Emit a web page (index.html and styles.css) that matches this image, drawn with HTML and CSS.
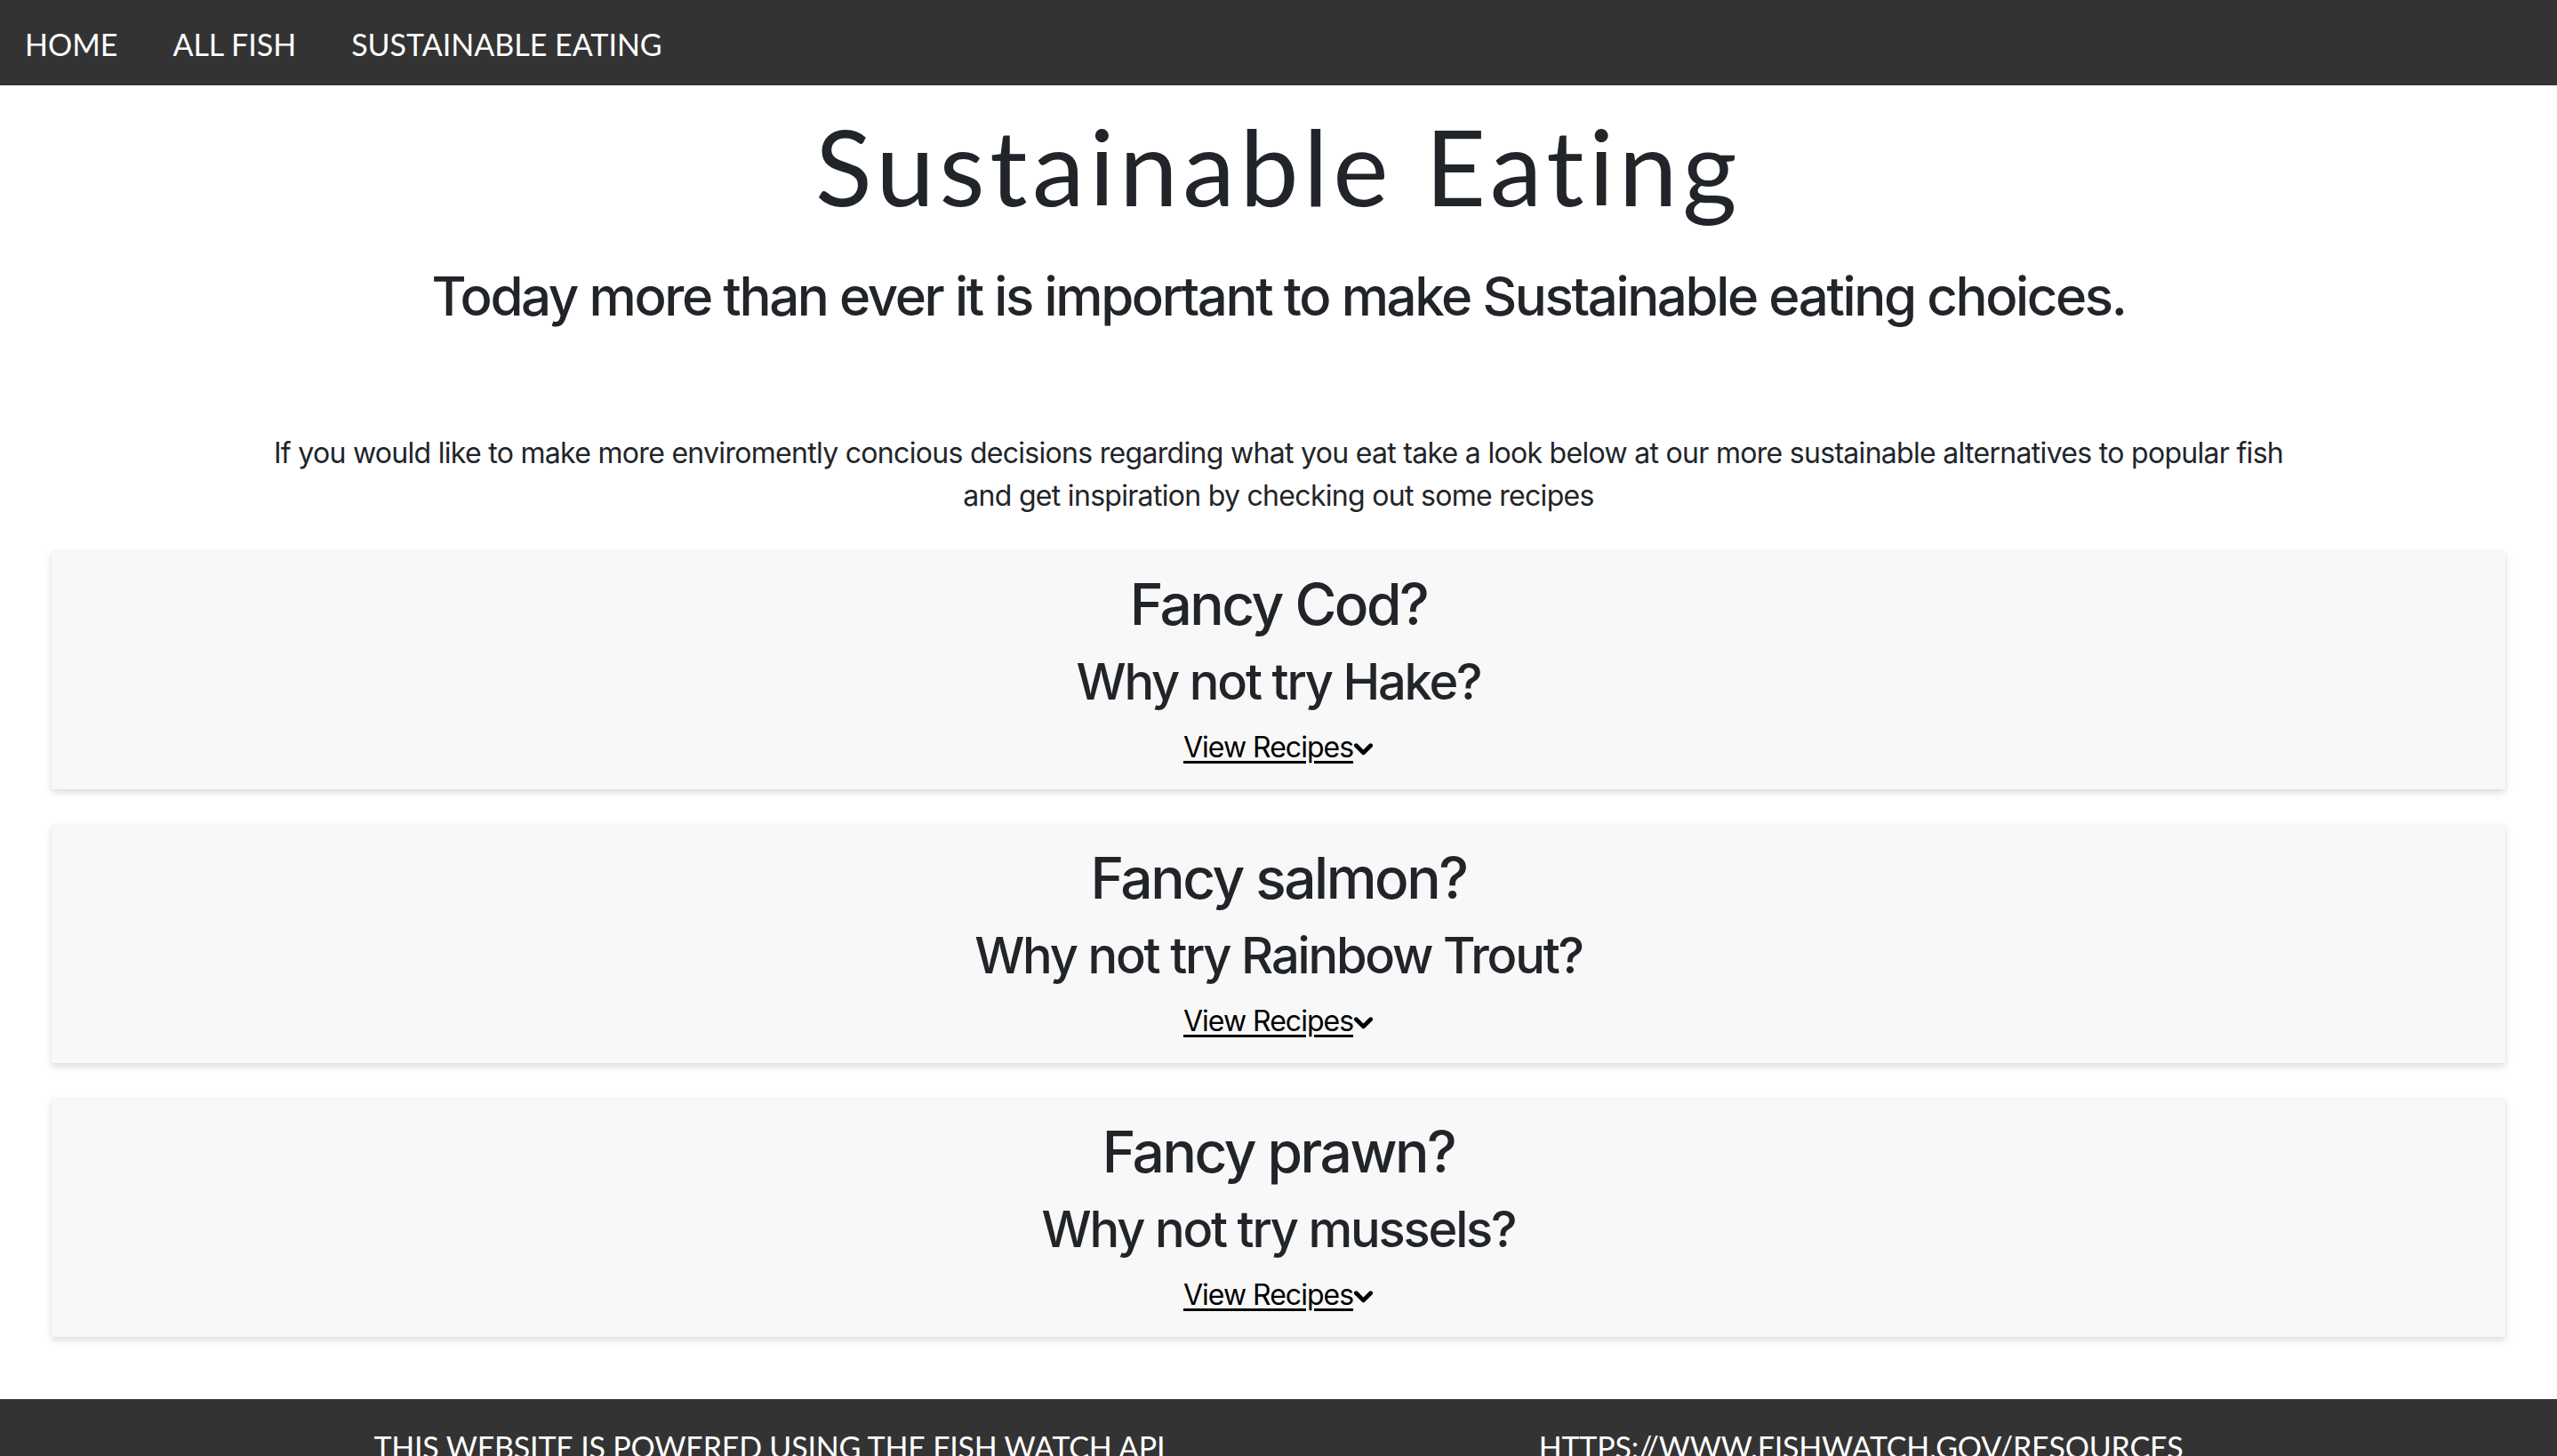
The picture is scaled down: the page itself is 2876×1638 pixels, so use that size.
FILE: index.html
```html
<!DOCTYPE html>
<html lang="en">
<head>
<meta charset="utf-8">
<title>Sustainable Eating</title>
<link rel="stylesheet" href="styles.css">
</head>
<body>
<nav class="topnav">
  <a class="nav-link" href="#">HOME</a>
  <a class="nav-link" href="#">ALL FISH</a>
  <a class="nav-link" href="#">SUSTAINABLE EATING</a>
</nav>
<main class="content">
  <h1 class="page-title">Sustainable Eating</h1>
  <h2 class="lead-title">Today more than ever it is important to make Sustainable eating choices.</h2>
  <p class="intro">If you would like to make more enviromently concious decisions regarding what you eat take a look below at our more sustainable alternatives to popular fish<br>and get inspiration by checking out some recipes</p>

  <section class="swap-card">
    <h2 class="swap-from">Fancy Cod?</h2>
    <h3 class="swap-to">Why not try Hake?</h3>
    <a class="recipes-link" href="#"><span class="recipes-text">View Recipes</span><svg class="chevron" viewBox="0 0 24 16" width="23" height="16"><polyline points="3.5,3.5 12,12 20.5,3.5" fill="none" stroke="#000" stroke-width="5" stroke-linecap="round" stroke-linejoin="round"/></svg></a>
  </section>

  <section class="swap-card">
    <h2 class="swap-from">Fancy salmon?</h2>
    <h3 class="swap-to">Why not try Rainbow Trout?</h3>
    <a class="recipes-link" href="#"><span class="recipes-text">View Recipes</span><svg class="chevron" viewBox="0 0 24 16" width="23" height="16"><polyline points="3.5,3.5 12,12 20.5,3.5" fill="none" stroke="#000" stroke-width="5" stroke-linecap="round" stroke-linejoin="round"/></svg></a>
  </section>

  <section class="swap-card">
    <h2 class="swap-from">Fancy prawn?</h2>
    <h3 class="swap-to">Why not try mussels?</h3>
    <a class="recipes-link" href="#"><span class="recipes-text">View Recipes</span><svg class="chevron" viewBox="0 0 24 16" width="23" height="16"><polyline points="3.5,3.5 12,12 20.5,3.5" fill="none" stroke="#000" stroke-width="5" stroke-linecap="round" stroke-linejoin="round"/></svg></a>
  </section>
</main>
<footer class="site-footer">
  <p class="footer-item">This website is powered using the fish watch API</p>
  <p class="footer-item">https://www.fishwatch.gov/resources</p>
</footer>
</body>
</html>
```
FILE: styles.css
```css
* { box-sizing: border-box; }

html, body {
  margin: 0;
  padding: 0;
  background: #fff;
}

body {
  font-family: Inter, "Liberation Sans", sans-serif;
  font-size: 32px;
  line-height: 48px;
  color: #212529;
  overflow: hidden;
}

.topnav {
  display: flex;
  align-items: center;
  gap: 62px;
  height: 96px;
  padding-left: 28px;
  background: #333333;
}

.nav-link {
  font-family: Lato, "Open Sans", sans-serif;
  font-size: 34px;
  font-weight: 400;
  color: #ffffff;
  text-decoration: none;
  letter-spacing: 0;
  padding-top: 4px;
}

.content {
  display: flex;
  flex-direction: column;
  align-items: center;
  padding: 0 58px;
}

.page-title {
  font-family: Lato, "Open Sans", sans-serif;
  font-size: 118px;
  font-weight: 400;
  line-height: 1.2;
  margin: 20px 0 0;
  letter-spacing: 5.5px;
}

.lead-title {
  font-size: 60px;
  font-weight: 500;
  line-height: 1.2;
  margin: 39px 0 0;
  letter-spacing: -2.4px;
}

.intro {
  margin: 117px 0 38px;
  text-align: center;
  letter-spacing: -0.7px;
}

.swap-card {
  align-self: stretch;
  display: flex;
  flex-direction: column;
  align-items: center;
  background: #f8f8f8;
  padding: 22px 0 23px;
  margin-bottom: 40px;
  box-shadow: 0 4px 8px rgba(0, 0, 0, 0.13), 0 0 3px rgba(0, 0, 0, 0.05);
}

.swap-from {
  font-size: 64px;
  font-weight: 500;
  line-height: 1.2;
  margin: 0 0 16px;
  letter-spacing: -2.5px;
}

.swap-to {
  font-size: 56px;
  font-weight: 500;
  line-height: 1.2;
  margin: 0 0 15px;
  letter-spacing: -2.2px;
}

.recipes-link {
  display: flex;
  align-items: flex-start;
  color: #000;
  text-decoration: none;
  font-size: 32px;
  line-height: 48px;
}

.recipes-text {
  letter-spacing: -1px;
  text-decoration: underline;
  text-underline-offset: 4px;
  text-decoration-thickness: 3px;
}

.chevron {
  display: block;
  margin-top: 18px;
}

.site-footer {
  display: flex;
  justify-content: space-evenly;
  background: #333333;
  margin-top: 30px;
  height: 200px;
  padding-top: 30px;
}

.footer-item {
  margin: 0;
  font-family: Lato, "Open Sans", sans-serif;
  font-weight: 400;
  font-size: 34px;
  line-height: 48px;
  color: #ffffff;
  text-transform: uppercase;
  letter-spacing: -0.2px;
}
```
